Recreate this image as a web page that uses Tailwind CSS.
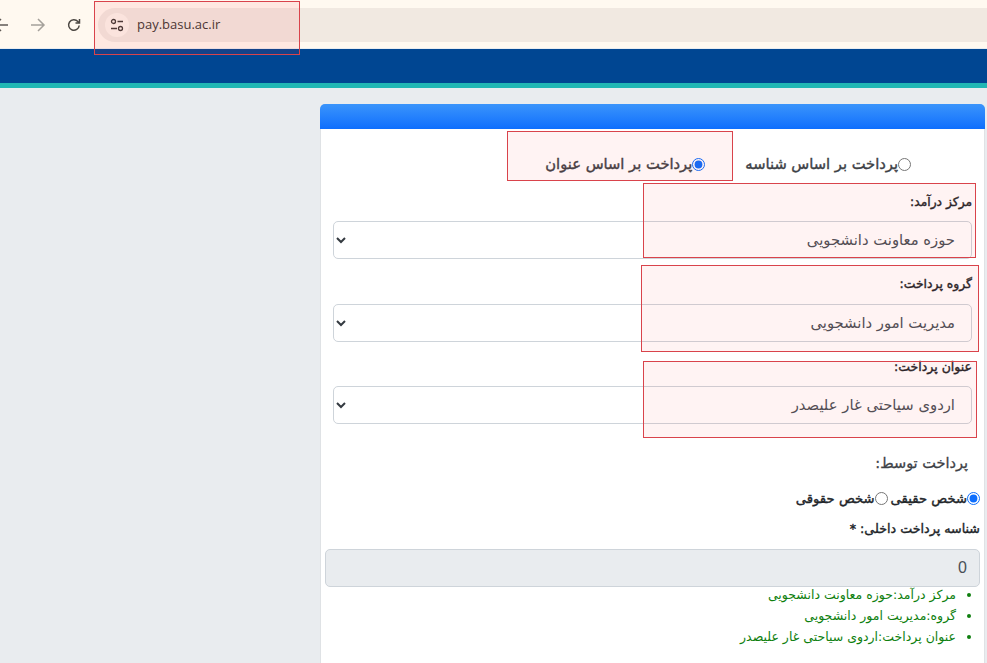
<!DOCTYPE html>
<html lang="fa">
<head>
  <meta charset="UTF-8">
  <title>pay.basu.ac.ir</title>
  <script src="https://cdn.jsdelivr.net/npm/@tailwindcss/browser@4"></script>
</head>
<body class="relative h-[663px] overflow-hidden bg-[#e9ecef] font-['DejaVu_Sans',sans-serif]">
  <!-- Browser bar -->
  <div class="flex h-[48px] items-center bg-[#fff9f0] pt-px">
    <div class="flex items-center text-[#5f5a55]">
      <svg class="-ml-[7px] h-[16px] w-[16px]" viewBox="0 0 16 16" fill="none" stroke="currentColor" stroke-width="1.5"><path d="M15 8H2M8 2 2 8l6 6"/></svg>
      <svg class="ml-[21px] h-[16px] w-[16px] text-[#a5a19b]" viewBox="0 0 16 16" fill="none" stroke="currentColor" stroke-width="1.5"><path d="M1 8h13M8 2l6 6-6 6"/></svg>
      <svg class="ml-[20px] h-[16px] w-[16px] text-[#4c4843]" viewBox="0 0 16 16" fill="none" stroke="currentColor" stroke-width="1.5"><path d="M13.2 8.5a5.3 5.3 0 1 1-1.3-4L13.5 6M13.5 2v4h-4"/></svg>
    </div>
    <div class="ml-[16px] flex h-[34px] flex-1 items-center rounded-l-full bg-[#f1e9e1] pl-[7px]">
      <div class="flex h-[24px] w-[24px] items-center justify-center rounded-full bg-[#fbf4ec]">
        <svg class="h-[14px] w-[14px] text-[#3f3b38]" viewBox="0 0 14 14" fill="none" stroke="currentColor" stroke-width="1.3"><circle cx="3.5" cy="3.5" r="2"/><path d="M7.5 3.5H13M1 10.5h6"/><circle cx="10.5" cy="10.5" r="2"/></svg>
      </div>
      <span class="ml-[8px] font-['Open_Sans',sans-serif] text-[13px] text-[#3c3835]">pay.basu.ac.ir</span>
    </div>
  </div>

  <!-- Site header -->
  <div class="mt-px h-[34px] bg-[#004692]"></div>
  <div class="h-[5px] bg-[#20b7b4]"></div>

  <!-- Payment card -->
  <main dir="rtl" class="ml-[320px] mr-[2px] mt-[16px] h-[570px] rounded-t-[5px] border border-[#dfe2e5] bg-white text-[#212529]">
    <div class="-m-px h-[25px] rounded-t-[5px] bg-gradient-to-b from-[#3a94fb] to-[#0d6efd]"></div>

    <div class="flex h-[53px] items-end pb-[7px] pr-[73px] text-[14.7px] leading-[20px] text-[#3d4146] [-webkit-text-stroke:0.4px_#3d4146]">
      <label class="flex items-center"><input type="radio" name="mode" class="h-[13px] w-[13px]"><span>پرداخت بر اساس شناسه</span></label>
      <label class="mr-[40px] flex items-center"><input type="radio" name="mode" checked class="h-[13px] w-[13px] accent-[#0d6efd]"><span>پرداخت بر اساس عنوان</span></label>
    </div>

    <div class="mx-[12px] mt-[12px]">
      <label class="block h-[28px] text-[12.3px] leading-[18px] [-webkit-text-stroke:0.4px_#212529]">مرکز درآمد:</label>
      <div class="relative">
        <select class="h-[38px] w-full appearance-none rounded-[5px] border border-[#ced4da] bg-white pr-[16px] text-[14.8px] text-[#495057]"><option>حوزه معاونت دانشجویی</option></select>
        <svg class="absolute left-[3px] top-[15px] h-[8px] w-[10px] text-[#343a40]" viewBox="0 0 10 8" fill="none" stroke="currentColor" stroke-width="2"><path d="m1 2 4 4 4-4"/></svg>
      </div>
      <label class="mt-[16px] block h-[29px] text-[12.4px] leading-[18px] [-webkit-text-stroke:0.4px_#212529]">گروه پرداخت:</label>
      <div class="relative">
        <select class="h-[38px] w-full appearance-none rounded-[5px] border border-[#ced4da] bg-white pr-[16px] text-[14.8px] text-[#495057]"><option>مدیریت امور دانشجویی</option></select>
        <svg class="absolute left-[3px] top-[15px] h-[8px] w-[10px] text-[#343a40]" viewBox="0 0 10 8" fill="none" stroke="currentColor" stroke-width="2"><path d="m1 2 4 4 4-4"/></svg>
      </div>
      <label class="mt-[16px] block h-[28px] text-[12.5px] leading-[18px] [-webkit-text-stroke:0.4px_#212529]">عنوان پرداخت:</label>
      <div class="relative">
        <select class="h-[38px] w-full appearance-none rounded-[5px] border border-[#ced4da] bg-white pr-[16px] text-[14.8px] text-[#495057]"><option>اردوی سیاحتی غار علیصدر</option></select>
        <svg class="absolute left-[3px] top-[15px] h-[8px] w-[10px] text-[#343a40]" viewBox="0 0 10 8" fill="none" stroke="currentColor" stroke-width="2"><path d="m1 2 4 4 4-4"/></svg>
      </div>
    </div>

    <p class="mr-[16px] mt-[28px] text-[14.5px] leading-[22px] text-[#3d4146] [-webkit-text-stroke:0.3px_#3d4146]">پرداخت توسط:</p>

    <div class="mr-[4px] mt-[15px] flex h-[20px] items-center text-[13.2px] [-webkit-text-stroke:0.4px_#212529]">
      <label class="flex items-center"><input type="radio" name="payer" checked class="h-[13px] w-[13px] accent-[#0d6efd]"><span>شخص حقیقی</span></label>
      <label class="mr-[3px] flex items-center"><input type="radio" name="payer" class="h-[13px] w-[13px]"><span>شخص حقوقی</span></label>
    </div>

    <p class="mr-[4px] mt-[10px] text-[12.7px] leading-[20px] [-webkit-text-stroke:0.4px_#212529]">شناسه پرداخت داخلی: *</p>

    <div class="mx-[4px] mt-[10px] flex h-[38px] items-center rounded-[5px] border border-[#ced4da] bg-[#e9ecef] px-[12px] font-['Liberation_Sans',sans-serif] text-[16px] text-[#495057]">0</div>

    <ul class="mt-[-3px] list-disc pr-[28px] text-[12.5px] leading-[21px] text-[#0f7f0f]">
      <li>مرکز درآمد:حوزه معاونت دانشجویی</li>
      <li>گروه:مدیریت امور دانشجویی</li>
      <li>عنوان پرداخت:اردوی سیاحتی غار علیصدر</li>
    </ul>
  </main>

  <!-- Red annotation boxes -->
  <div class="absolute left-[94px] top-[1px] h-[54px] w-[206px] border border-[#d9434b] bg-red-500/[0.08]"></div>
  <div class="absolute left-[507px] top-[131px] h-[50px] w-[226px] border border-[#d9434b] bg-red-500/[0.06]"></div>
  <div class="absolute left-[643px] top-[183px] h-[75px] w-[333px] border border-[#d9434b] bg-red-500/[0.06]"></div>
  <div class="absolute left-[641px] top-[265px] h-[87px] w-[338px] border border-[#d9434b] bg-red-500/[0.06]"></div>
  <div class="absolute left-[643px] top-[361px] h-[77px] w-[334px] border border-[#d9434b] bg-red-500/[0.06]"></div>
</body>
</html>
